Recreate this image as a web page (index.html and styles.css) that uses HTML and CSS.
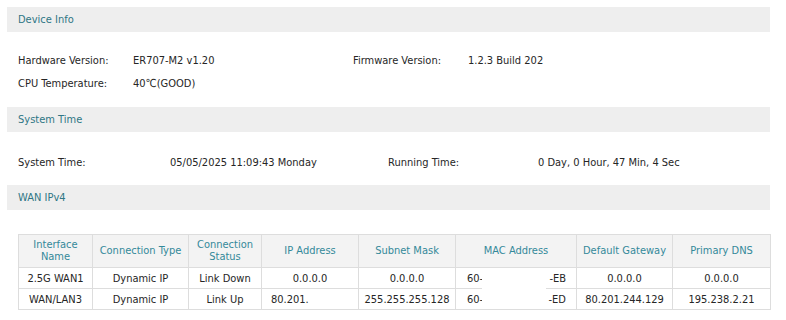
FILE: index.html
```html
<!DOCTYPE html>
<html>
<head>
<meta charset="utf-8">
<link rel="stylesheet" href="styles.css">
</head>
<body>
<div class="page">
  <div class="bar">Device Info</div>
  <div class="info info-device">
    <div class="row">
      <span class="lbl w115">Hardware Version:</span><span class="val w220">ER707-M2 v1.20</span>
      <span class="lbl w115">Firmware Version:</span><span class="val">1.2.3 Build 202</span>
    </div>
    <div class="row">
      <span class="lbl w115">CPU Temperature:</span><span class="val">40℃(GOOD)</span>
    </div>
  </div>

  <div class="bar">System Time</div>
  <div class="info info-time">
    <div class="row">
      <span class="lbl w152">System Time:</span><span class="val w218">05/05/2025 11:09:43 Monday</span>
      <span class="lbl w150">Running Time:</span><span class="val">0 Day, 0 Hour, 47 Min, 4 Sec</span>
    </div>
  </div>

  <div class="bar">WAN IPv4</div>
  <div class="table-wrap">
    <table class="wan">
      <colgroup>
        <col style="width:74px"><col style="width:96px"><col style="width:73px"><col style="width:97px">
        <col style="width:97px"><col style="width:121px"><col style="width:96px"><col style="width:98px">
      </colgroup>
      <thead>
        <tr>
          <th>Interface<br>Name</th><th>Connection Type</th><th>Connection<br>Status</th><th>IP Address</th>
          <th>Subnet Mask</th><th>MAC Address</th><th>Default Gateway</th><th>Primary DNS</th>
        </tr>
      </thead>
      <tbody>
        <tr>
          <td>2.5G WAN1</td><td>Dynamic IP</td><td>Link Down</td><td>0.0.0.0</td>
          <td>0.0.0.0</td><td class="mac"><span>60-</span><span>-EB</span></td><td>0.0.0.0</td><td>0.0.0.0</td>
        </tr>
        <tr>
          <td>WAN/LAN3</td><td>Dynamic IP</td><td>Link Up</td><td class="left">80.201.</td>
          <td>255.255.255.128</td><td class="mac"><span>60-</span><span>-ED</span></td><td>80.201.244.129</td><td>195.238.2.21</td>
        </tr>
      </tbody>
    </table>
    <div class="redact"></div>
  </div>
</div>
</body>
</html>
```

FILE: styles.css
```css
* { box-sizing: border-box; }
html, body { margin: 0; padding: 0; background: #fff; }
body {
  font-family: "DejaVu Sans Condensed", "DejaVu Sans", sans-serif;
  font-size: 11px;
  color: #262626;
}
.page { padding: 7px 16px 0 7px; width: 786px; }
.bar {
  background: #eeeeee;
  height: 25px;
  line-height: 25px;
  padding-left: 11px;
  color: #2f7685;
  font-size: 11px;
}
.info { padding-left: 11px; }
.info-device { padding-top: 17px; padding-bottom: 12px; }
.info-time { padding-top: 19px; padding-bottom: 11px; }
.row { display: flex; height: 23px; line-height: 23px; white-space: nowrap; }
.lbl, .val { display: inline-block; }
.w115 { width: 115px; }
.w220 { width: 220px; }
.w152 { width: 152px; }
.w218 { width: 218px; }
.w150 { width: 150px; }

.table-wrap { position: relative; margin: 24px 0 0 11px; }
table.wan {
  border-collapse: collapse;
  table-layout: fixed;
  width: 752px;
}
.wan th, .wan td {
  border: 1px solid #dddddd;
  text-align: center;
  white-space: nowrap;
  padding: 0;
}
.wan th {
  background: #f3f3f3;
  color: #33899a;
  font-weight: normal;
  height: 33px;
  line-height: 12px;
}
.wan td { height: 21px; line-height: 19px; color: #262626; }
.wan td.left { text-align: left; padding-left: 9px; }
.wan td.mac span:first-child { float: left; padding-left: 11px; }
.wan td.mac span:last-child { float: right; padding-right: 10px; }
.redact {
  position: absolute;
  left: 464px;
  top: 34px;
  width: 64px;
  height: 40px;
  background: #fff;
}
```
